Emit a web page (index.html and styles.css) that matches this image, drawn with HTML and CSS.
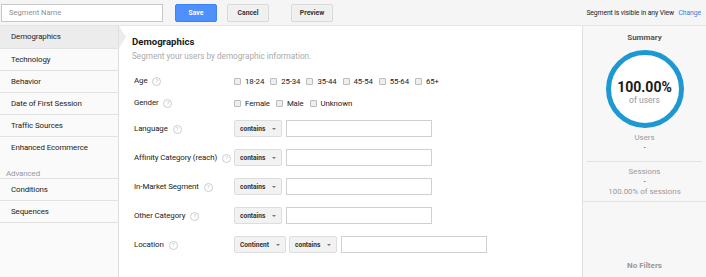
FILE: index.html
```html
<!DOCTYPE html>
<html lang="en">
<head>
    <meta charset="UTF-8">
    <title>Segment Builder</title>
    <link rel="stylesheet" href="styles.css">
</head>
<body>
    <div class="topbar">
        <input class="seg-name" type="text" placeholder="Segment Name">
        <button class="btn btn-save">Save</button>
        <button class="btn btn-cancel">Cancel</button>
        <button class="btn btn-preview">Preview</button>
        <div class="visibility">Segment is visible in any View <a href="#">Change</a></div>
    </div>

    <div class="builder">
        <ul class="nav">
            <li class="active">Demographics</li>
            <li>Technology</li>
            <li>Behavior</li>
            <li>Date of First Session</li>
            <li>Traffic Sources</li>
            <li class="last">Enhanced Ecommerce</li>
            <li class="nav-label">Advanced</li>
            <li>Conditions</li>
            <li>Sequences</li>
        </ul>

        <div class="main">
            <h3>Demographics</h3>
            <p class="sub">Segment your users by demographic information.</p>

            <div class="row row-check first">
                <div class="label">Age <span class="help">?</span></div>
                <div class="checks">
                    <label><span class="box"></span>18-24</label>
                    <label><span class="box"></span>25-34</label>
                    <label><span class="box"></span>35-44</label>
                    <label><span class="box"></span>45-54</label>
                    <label><span class="box"></span>55-64</label>
                    <label><span class="box"></span>65+</label>
                </div>
            </div>
            <div class="row row-check">
                <div class="label">Gender <span class="help">?</span></div>
                <div class="checks">
                    <label><span class="box"></span>Female</label>
                    <label><span class="box"></span>Male</label>
                    <label><span class="box"></span>Unknown</label>
                </div>
            </div>
            <div class="row">
                <div class="label">Language <span class="help">?</span></div>
                <div class="select">contains <span class="caret"></span></div>
                <div class="text-input"></div>
            </div>
            <div class="row">
                <div class="label">Affinity Category (reach) <span class="help">?</span></div>
                <div class="select">contains <span class="caret"></span></div>
                <div class="text-input"></div>
            </div>
            <div class="row">
                <div class="label">In-Market Segment <span class="help">?</span></div>
                <div class="select">contains <span class="caret"></span></div>
                <div class="text-input"></div>
            </div>
            <div class="row">
                <div class="label">Other Category <span class="help">?</span></div>
                <div class="select">contains <span class="caret"></span></div>
                <div class="text-input"></div>
            </div>
            <div class="row">
                <div class="label">Location <span class="help">?</span></div>
                <div class="select select-wide">Continent <span class="caret"></span></div>
                <div class="select">contains <span class="caret"></span></div>
                <div class="text-input"></div>
            </div>
        </div>

        <div class="summary">
            <div class="sum-title">Summary</div>
            <div class="ring">
                <div class="pct">100.00%</div>
                <div class="of">of users</div>
            </div>
            <div class="stat">
                <div>Users</div>
                <div class="dash">-</div>
            </div>
            <div class="stat stat-sessions">
                <div>Sessions</div>
                <div class="dash">-</div>
                <div>100.00% of sessions</div>
            </div>
            <div class="filters">No Filters</div>
        </div>
    </div>
</body>
</html>
```

FILE: styles.css
```css
body { margin: 0; font-family: Roboto, "Liberation Sans", Arial, sans-serif; font-size: 7.5px; color: #222; background: #fff; overflow: hidden; }

.topbar { height: 26px; background: #f5f5f5; border-bottom: 1px solid #e5e5e5; box-sizing: border-box; display: flex; align-items: center; padding: 0 5px 0 1px; }
.seg-name { width: 162px; height: 18px; box-sizing: border-box; border: 1px solid #c8c8c8; padding: 0 7px; font-family: inherit; font-size: 7.6px; background: #fff; margin-right: 12px; }
.seg-name::placeholder { color: #8f8f8f; }
.btn { height: 18px; width: 42px; border-radius: 2px; font-family: inherit; font-size: 6.8px; font-weight: bold; padding: 0; cursor: pointer; }
.btn-save { background: #4d90fe; border: 1px solid #3f82f1; color: #fff; margin-right: 10px; }
.btn-cancel { background: #f0f0f0; border: 1px solid #d9d9d9; color: #333; margin-right: 22px; }
.btn-preview { background: #f0f0f0; border: 1px solid #d9d9d9; color: #333; }
.visibility { margin-left: auto; font-size: 6.8px; color: #222; letter-spacing: -0.1px; }
.visibility a { color: #3b7fd9; text-decoration: none; margin-left: 3px; }

.builder { display: flex; height: 251px; }

.nav { list-style: none; margin: 0; padding: 1px 0 0; width: 118px; background: #fafafa; border-right: 1px solid #e0e0e0; flex-shrink: 0; }
.nav li { height: 21px; line-height: 21px; padding-left: 11px; border-bottom: 1px solid #e2e2e2; color: #222; font-size: 7.9px; letter-spacing: -0.1px; position: relative; }
.nav li.active { background: #ececec; margin-top: -1px; height: 22px; }
.nav li.active::after { content: ""; position: absolute; right: -8px; top: 0; border-top: 11px solid transparent; border-bottom: 11px solid transparent; border-left: 7px solid #ececec; z-index: 2; }
.nav li.last { border-bottom: none; height: 22px; }
.nav li.nav-label { height: 10px; line-height: 12px; margin-top: 9px; padding-left: 6px; color: #999; border-bottom: 1px solid #e2e2e2; }

.main { flex: 1; padding: 9px 0 0 13px; background: #fff; border-right: 1px solid #e0e0e0; }
.main h3 { margin: 0; font-size: 9.6px; font-weight: bold; color: #1a1a1a; line-height: 13px; }
.main .sub { margin: 2px 0 0; color: #aaa; font-size: 8.2px; line-height: 12px; }

.row { display: flex; align-items: center; height: 29px; }
.row-check { height: 22px; }
.row-check.first { margin-top: 8px; }
.label { width: 100px; padding-left: 2px; font-size: 7.9px; letter-spacing: -0.1px; color: #222; flex-shrink: 0; white-space: nowrap; }
.help { display: inline-block; width: 7px; height: 7px; border: 1px solid #ccc; border-radius: 50%; font-size: 5.5px; line-height: 7px; text-align: center; color: #bbb; margin-left: 3px; vertical-align: 0; letter-spacing: 0; }

.checks { display: flex; gap: 6px; }
.checks label { display: flex; align-items: center; font-size: 7.8px; letter-spacing: -0.1px; color: #222; }
.box { width: 5px; height: 5px; border: 1px solid #bbb; border-radius: 1px; background: #eee; margin-right: 4px; }

.select { width: 48px; height: 17px; box-sizing: border-box; background: #f2f2f2; border: 1px solid #ddd; border-radius: 2px; font-size: 6.6px; font-weight: bold; color: #333; padding-left: 5px; display: flex; align-items: center; margin-right: 4px; }
.select-wide { width: 52px; margin-right: 3px; }
.caret { width: 0; height: 0; border-left: 2px solid transparent; border-right: 2px solid transparent; border-top: 2px solid #777; margin-left: auto; margin-right: 5px; }
.text-input { width: 146px; height: 17px; box-sizing: border-box; border: 1px solid #d0d0d0; background: #fff; }

.summary { width: 123px; background: #f7f7f7; text-align: center; color: #999; font-size: 7.9px; display: flex; flex-direction: column; }
.sum-title { margin-top: 7px; font-weight: bold; color: #555; font-size: 8px; }
.ring { width: 68px; height: 63px; padding-top: 5px; border: 5px solid #1e98d3; border-radius: 50%; margin: 8px auto 0; display: flex; flex-direction: column; justify-content: center; background: #fff; }
.pct { font-size: 14px; font-weight: bold; color: #1a1a1a; line-height: 16px; }
.of { font-size: 8.5px; color: #999; line-height: 10px; }
.stat { margin: 0 4px; padding: 5px 0 8px; border-bottom: 1px solid #e2e2e2; line-height: 10px; }
.stat .dash { color: #444; }
.stat-sessions { margin: 0; padding: 5px 0 4px; }
.filters { margin-top: auto; margin-bottom: 7px; font-weight: bold; color: #999; font-size: 8px; }
```
